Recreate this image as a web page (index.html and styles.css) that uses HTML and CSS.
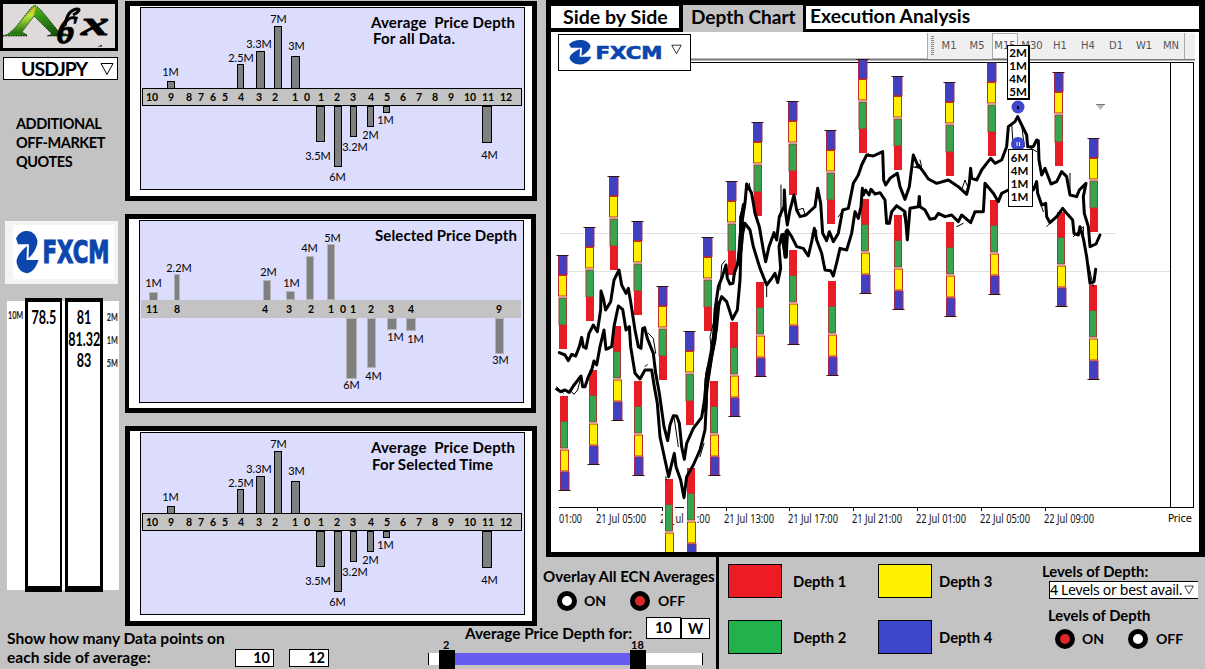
FILE: index.html
```html
<!DOCTYPE html>
<html lang="en">
<head>
<meta charset="utf-8">
<title>Depth Chart</title>
<link rel="stylesheet" href="styles.css">
</head>
<body>
<svg class="defs" width="0" height="0" aria-hidden="true">
  <defs>
    <symbol id="tri" viewBox="0 0 14 14" overflow="visible"><path d="M1 1.5H13L7 12.5Z" fill="#fff" stroke="#000"/></symbol>
    <symbol id="fxcm" viewBox="0 0 96 26" overflow="visible">
      <path d="M1 4.500C4 1 8 0 12 0C17 0 21 2 22.500 6C22.500 10 18 14 13.500 16.500L14 8H3Z" fill="#0b46ad"/>
      <path d="M23.500 17.500L22 20C19 24 15 25.500 12 25.500C6 25.500 2 22 1.500 18.500C2 15 6 12 12 9L11.500 17.500Z" fill="#0b46ad"/>
      <text x="27.500" y="19.500" class="fx-word" textLength="67" lengthAdjust="spacingAndGlyphs">FXCM</text>
    </symbol>
    <g id="up">
      <rect x="-4" y=".5" width="8.500" height="19" class="c4"/>
      <rect x="-4" y="20.500" width="8" height="20.500" class="c3"/>
      <rect x="-3.500" y="43" width="7.500" height="27" class="c2"/>
      <rect x="-3.500" y="70" width="8" height="24" class="c1"/>
      <path d="M-6 .5H6" class="cap"/>
    </g>
    <g id="dn">
      <rect x="-4.500" y="0" width="8" height="25.500" class="c1"/>
      <rect x="-4" y="25.500" width="7" height="26.500" class="c2"/>
      <rect x="-4" y="54" width="8" height="21" class="c3"/>
      <rect x="-4" y="76" width="8.500" height="18" class="c4"/>
      <path d="M-6 94.500H6" class="cap"/>
    </g>
    <g id="avg">
      <g class="bar-line">
        <rect x="27.500" y="74.500" width="7" height="7"/><rect x="97.500" y="57.500" width="6" height="24"/>
        <rect x="116.500" y="44.500" width="8" height="37"/><rect x="134.500" y="19.500" width="7" height="62"/>
        <rect x="151.500" y="49.500" width="8" height="32"/><rect x="176.500" y="99.500" width="8" height="35"/>
        <rect x="194.500" y="99.500" width="7" height="60"/><rect x="210.500" y="99.500" width="6" height="30"/>
        <rect x="227.500" y="99.500" width="6" height="20"/><rect x="243.500" y="99.500" width="6" height="6"/>
        <rect x="342.500" y="99.500" width="9" height="36"/>
        <rect x="2.500" y="81.500" width="379" height="17" class="scale"/>
      </g>
      <g class="num">
        <text x="12" y="94">10</text><text x="31" y="94">9</text><text x="49" y="94">8</text><text x="61" y="94">7</text><text x="73" y="94">6</text><text x="85" y="94">5</text><text x="101" y="94">4</text><text x="119" y="94">3</text><text x="135" y="94">2</text><text x="155" y="94">1</text><text x="167" y="94">0</text><text x="181" y="94">1</text><text x="197" y="94">2</text><text x="213" y="94">3</text><text x="231" y="94">4</text><text x="247" y="94">5</text><text x="263" y="94">6</text><text x="279" y="94">7</text><text x="295" y="94">8</text><text x="311" y="94">9</text><text x="330" y="94">10</text><text x="348" y="94">11</text><text x="366" y="94">12</text>
      </g>
      <g class="val">
        <text x="30.500" y="69">1M</text><text x="101" y="54.500">2.5M</text><text x="119" y="40.500">3.3M</text><text x="138.500" y="16">7M</text><text x="156.500" y="42.500">3M</text><text x="178" y="153">3.5M</text><text x="197.500" y="174">6M</text><text x="215" y="144">3.2M</text><text x="230.500" y="132">2M</text><text x="245.500" y="117">1M</text><text x="349.500" y="152">4M</text>
      </g>
    </g>
    <linearGradient id="peak" x1="0" y1="0" x2="1" y2="1"><stop offset="0" stop-color="#8bd31c"/><stop offset=".45" stop-color="#399a19"/><stop offset="1" stop-color="#063d0c"/></linearGradient>
    <linearGradient id="tip" x1="0" y1="0" x2="0" y2="1"><stop offset="0" stop-color="#f0a020"/><stop offset=".35" stop-color="#b9e83c"/><stop offset="1" stop-color="#176d12"/></linearGradient>
  </defs>
</svg>

<div class="app">
  <aside class="side">
    <div class="logo">
      <svg width="112" height="43" viewBox="0 0 112 43">
        <path d="M0 32L5 30L12 24L28 4L32 1L38 6L56 28L66 31V32H44L49 30L31 12L19 28L24 31V32H1Z" fill="url(#peak)" stroke="#111" stroke-dasharray="1.500 1" stroke-width=".8"/>
        <path d="M7 30L28 6L33 2L31 11L18 29Z" fill="url(#tip)"/>
        <text transform="translate(52 39) skewX(-10)" class="script" font-size="40" textLength="18" lengthAdjust="spacingAndGlyphs">6</text>
        <path d="M62 22C63 13 66 6 74 5C78 5 76 8 70 11" fill="none" stroke="#000" stroke-width="3"/>
        <text x="78" y="31" class="script" font-size="33" textLength="28" lengthAdjust="spacingAndGlyphs">x</text>
        <path d="M94 42.500L99 41V42.500Z"/>
      </svg>
    </div>
    <div class="pair"><span>USDJPY</span><svg width="14" height="14"><use href="#tri"/></svg></div>
    <div class="quotes">ADDITIONAL<br>OFF-MARKET<br>QUOTES</div>
    <div class="broker-card"><div><svg width="96" height="43" viewBox="0 0 96 26" preserveAspectRatio="none"><use href="#fxcm" width="96" height="26"/></svg></div></div>
    <div class="ladder">
      <div class="sizes left"><span>10M</span></div>
      <div class="prices"><span>78.5</span></div>
      <div class="prices"><span>81</span><span>81.32</span><span>83</span></div>
      <div class="sizes"><span>2M</span><span>1M</span><span>5M</span></div>
    </div>
  </aside>

  <section class="charts">
    <div class="panel">
      <svg class="plot" width="385" height="184">
        <rect x=".5" y=".5" width="384" height="182" class="frame"/>
        <use href="#avg"/>
        <g class="head"><text x="231" y="21" textLength="144" xml:space="preserve">Average  Price Depth</text><text x="233" y="37" textLength="82">For all Data.</text></g>
      </svg>
    </div>
    <div class="panel mid">
      <svg class="plot" width="385" height="184">
        <rect x=".5" y=".5" width="384" height="182" class="frame"/>
        <g class="bar-soft">
          <rect x="10.500" y="72.500" width="8" height="9"/><rect x="35.500" y="54.500" width="5" height="26"/><rect x="124.500" y="60.500" width="7" height="20"/><rect x="147.500" y="71.500" width="8" height="8"/><rect x="167.500" y="36.500" width="7" height="43"/><rect x="188.500" y="24.500" width="7" height="55"/><rect x="207.500" y="98.500" width="10" height="60"/><rect x="228.500" y="98.500" width="8" height="49"/><rect x="248.500" y="98.500" width="9" height="11"/><rect x="267.500" y="98.500" width="9" height="12"/><rect x="356.500" y="98.500" width="8" height="35"/>
        </g>
        <rect x="2" y="80" width="380" height="18" fill="#c3c3c3"/>
        <g class="num"><text x="13" y="93">11</text><text x="38" y="93">8</text><text x="126" y="93">4</text><text x="150" y="93">3</text><text x="172" y="93">2</text><text x="192" y="93">1</text><text x="204" y="93">0</text><text x="214" y="93">1</text><text x="232" y="93">2</text><text x="252" y="93">3</text><text x="272" y="93">4</text><text x="360" y="93">9</text></g>
        <g class="val"><text x="14.500" y="67">1M</text><text x="40" y="52">2.2M</text><text x="129.500" y="56">2M</text><text x="152.500" y="67">1M</text><text x="170.500" y="32">4M</text><text x="193.500" y="22">5M</text><text x="212.500" y="169">6M</text><text x="234.500" y="160">4M</text><text x="256.500" y="121">1M</text><text x="276.500" y="123">1M</text><text x="361.500" y="144">3M</text></g>
        <g class="head"><text x="236" y="21" textLength="142">Selected Price Depth</text></g>
      </svg>
    </div>
    <div class="panel">
      <svg class="plot" width="385" height="184">
        <rect x=".5" y=".5" width="384" height="182" class="frame"/>
        <use href="#avg"/>
        <g class="head"><text x="231" y="21" textLength="144" xml:space="preserve">Average  Price Depth</text><text x="232" y="38" textLength="121">For Selected Time</text></g>
      </svg>
    </div>
  </section>

  <main class="main">
    <nav class="tabs"><span class="tab t1">Side by Side</span><span class="tab t2">Depth Chart</span><span class="tab t3">Execution Analysis</span></nav>
    <div class="stage">
      <svg class="market" width="648" height="520" viewBox="551 32 648 520">
        <g stroke="#e2e2e2"><path d="M559 233.500H1116M559 271.500H1170"/></g>
        <path d="M691 59.500H1195" stroke="#777" stroke-width="2"/>
        <path d="M691 62.500H1194M1170.500 63V507M1193.500 63V507M559 507.500H1194" fill="none" stroke="#000"/>
        <path d="M597.500 507v4M662.500 507v4M726.500 507v4M789.500 507v4M853.500 507v4M917.500 507v4M981.500 507v4M1045.500 507v4" stroke="#000"/>
        <g class="time">
          <text x="559" y="523" textLength="23" lengthAdjust="spacingAndGlyphs">01:00</text>
          <text x="596" y="523" textLength="50" lengthAdjust="spacingAndGlyphs">21 Jul 05:00</text>
          <text x="660" y="523" textLength="50" lengthAdjust="spacingAndGlyphs">21 Jul 09:00</text>
          <text x="724" y="523" textLength="50" lengthAdjust="spacingAndGlyphs">21 Jul 13:00</text>
          <text x="788" y="523" textLength="50" lengthAdjust="spacingAndGlyphs">21 Jul 17:00</text>
          <text x="852" y="523" textLength="50" lengthAdjust="spacingAndGlyphs">21 Jul 21:00</text>
          <text x="916" y="523" textLength="50" lengthAdjust="spacingAndGlyphs">22 Jul 01:00</text>
          <text x="980" y="523" textLength="50" lengthAdjust="spacingAndGlyphs">22 Jul 05:00</text>
          <text x="1044" y="523" textLength="50" lengthAdjust="spacingAndGlyphs">22 Jul 09:00</text>
        </g>
        <text x="1168" y="522" class="price" textLength="24">Price</text>
        <path d="M663 479h12v45h-12zM684 500h13v30h-13z" fill="#fff"/>
        <use href="#up" x="562.500" y="255"/><use href="#up" x="589.500" y="227"/><use href="#up" x="613.500" y="176"/><use href="#up" x="637.500" y="221"/><use href="#up" x="662.500" y="286"/><use href="#up" x="689.500" y="331"/><use href="#up" x="707.500" y="237"/><use href="#up" x="731.500" y="181"/><use href="#up" x="757.500" y="122"/><use href="#up" x="792.500" y="101"/><use href="#up" x="830.500" y="130"/><use href="#up" x="862.500" y="59"/><use href="#up" x="897.500" y="76"/><use href="#up" x="949.500" y="82"/><use href="#up" x="991.500" y="62"/><use href="#up" x="1058.500" y="72"/><use href="#up" x="1093.500" y="138"/>
        <use href="#dn" x="564.500" y="396"/><use href="#dn" x="593.500" y="370"/><use href="#dn" x="617.500" y="326"/><use href="#dn" x="638.500" y="381"/><use href="#dn" x="669.500" y="479"/><use href="#dn" x="691.500" y="468"/><use href="#dn" x="714.500" y="381"/><use href="#dn" x="734.500" y="322"/><use href="#dn" x="760.500" y="282"/><use href="#dn" x="793.500" y="250"/><use href="#dn" x="832.500" y="281"/><use href="#dn" x="865.500" y="199"/><use href="#dn" x="898.500" y="215"/><use href="#dn" x="950.500" y="222"/><use href="#dn" x="994.500" y="200"/><use href="#dn" x="1061.500" y="212"/><use href="#dn" x="1093.500" y="285"/>
        <g transform="translate(540 230) scale(.33333)" class="trace">
          <polyline points="58,368 75,375 85,392 95,373 107,378 118,350 125,322 130,350 138,355 147,310 160,285 172,305 182,240 183,183 190,205 197,240 212,215 222,150 237,120 245,165 258,190 265,175 272,215 285,300 295,350 303,355 308,295 314,293 322,325 340,370 347,430 358,490 365,540 372,590 383,632 390,585 400,557 410,558 418,580 425,650 433,688 440,640 460,595 485,562 495,500 500,430 515,370 522,300 525,240 535,170 547,140 558,105 562,145 570,162 579,160 583,130 597,90 602,20"/>
          <polyline points="50,477 62,485 75,480 88,487 100,468 123,438 128,470 135,470 145,440 155,420 162,393 170,405 180,350 192,300 198,358 215,350 222,290 235,228 248,238 258,300 268,290 272,350 285,430 300,447 315,420 335,420 343,470 352,520 360,620 375,690 386,740 393,710 403,670 408,710 422,750 432,803 440,740 460,705 480,660 495,600 498,540 500,480 515,380 525,330 530,240 545,200 560,215 577,268 592,240 600,150 603,60"/>
          <path class="wide" d="M495 540L500 450L518 350L527 300L535 220M598 85L602 20L607 -20"/>
          <path class="hair" d="M90 480L102 493L113 480L123 440M315 410L322 403M325 310L340 325L347 370M402 560L415 650M515 370L510 320L520 280M540 180L545 105L555 92M480 680L492 640M50 470L70 490M378 740V750"/>
        </g>
        <g transform="translate(700 60) scale(.33333)" class="trace">
          <polyline points="122,530 122,470 135,430 140,372 155,400 165,460 178,500 190,570 197,605 207,560 222,518 230,540 238,470 252,440 253,390 257,460 262,495 270,450 282,405 290,450 300,470 318,465 345,440 353,385 362,430 368,520 380,542 388,515 400,545 415,520 428,450 445,445 460,370 475,345 485,315 500,285 520,288 548,275 551,360 557,375 570,355 592,340 600,380 615,418 628,380 640,285 655,320"/>
          <polyline points="123,570 128,520 135,490 150,510 160,560 180,625 200,675 215,655 225,640 233,668 242,625 237,560 245,525 257,590 262,510 275,530 290,560 310,565 325,588 335,545 343,505 350,540 365,580 375,630 392,632 400,648 412,600 420,565 440,570 455,520 465,455 475,475 483,440 487,385 490,405 497,390 507,405 513,388 525,402 540,398 555,420 560,490 568,490 575,455 590,437 615,455 622,540 630,445 655,440 658,410"/>
          <path class="wide" d="M115 610L123 550L125 480L132 435M250 525L257 590L260 515"/>
          <path class="hair" d="M148 370L155 410M243 375V470M292 450L310 445L315 465M350 390L345 440M415 470L430 450M335 520L350 510V545M200 675V710M490 300L505 280M635 320L660 325M610 460L618 500"/>
        </g>
        <g transform="translate(870 0) scale(.33333)" class="trace">
          <polyline points="145,495 160,515 175,537 200,550 235,540 265,560 290,583 298,550 302,505 305,535 320,540 335,510 350,490 362,475 375,490 395,480 410,440 415,380 435,365 443,350 455,375 470,405 473,440 490,440 500,420 505,422 507,480 515,525 525,505 543,552 560,545 575,515 590,530 600,585 620,590 628,570 648,550 640,590 643,640 655,680 660,740 678,732 690,705"/>
          <polyline points="148,590 150,620 165,630 180,658 195,655 205,640 225,650 245,645 265,665 275,645 302,668 315,635 340,635 345,550 370,580 385,605 395,580 415,570 490,570 500,545 503,580 515,615 527,610 530,650 540,668 560,650 578,625 590,640 608,660 612,700 625,705 630,680 640,715 650,770 660,850 672,845 677,808"/>
          <path class="hair" d="M135 500H155L150 480M275 570L285 540L293 560M425 370L430 445M455 375L463 440M475 440L500 455M260 680L280 670M600 520V575M508 600L520 635M530 680L545 665M610 710L640 680V720M655 790L670 860"/>
        </g>
        <circle cx="1018" cy="107" r="6.500" fill="#3f48cc"/><path d="M1018 106v3" stroke="#000" stroke-width="2"/>
        <circle cx="1018" cy="144" r="7" fill="#3f48cc"/><path d="M1017 142v4M1019.500 142v4" stroke="#fff"/>
        <path d="M1096 104h9l-4.500 6z" fill="#b0b8b8"/><path d="M1096 104.500h9" stroke="#777"/>
      </svg>
      <div class="broker"><div><svg width="96" height="25" viewBox="0 0 96 26" preserveAspectRatio="none"><use href="#fxcm" width="96" height="26"/></svg></div><svg width="11" height="11"><use href="#tri"/></svg></div>
      <div class="toolbar"><i class="grip"></i><span>M1</span><span>M5</span><span class="on">M15</span><span>M30</span><span>H1</span><span>H4</span><span>D1</span><span>W1</span><span class="last">MN</span></div>
      <div class="callout top">2M<br>1M<br>4M<br>5M</div>
      <div class="callout low">6M<br>4M<br>1M<br>1M</div>
    </div>
  </main>

  <section class="overlay">
    <div class="title">Overlay All ECN Averages</div>
    <div class="radios"><i class="radio"></i><span>ON</span><i class="radio sel"></i><span>OFF</span></div>
  </section>

  <section class="points">
    <div class="ptext">Show how many Data points on<br>each side of average:</div>
    <div class="box">10</div><div class="box">12</div>
  </section>

  <section class="average">
    <div class="avg-row"><span class="avg-text">Average Price Depth for:</span><div class="box n">10</div><div class="box w">W</div></div>
    <div class="marks"><span>2</span><span>18</span></div>
    <div class="slider"><i class="pad"></i><i class="handle"></i><i class="fill"></i><i class="handle"></i></div>
  </section>

  <section class="legend">
    <div class="keys">
      <div class="key"><i class="sw red"></i>Depth 1</div><div class="key"><i class="sw yellow"></i>Depth 3</div>
      <div class="key"><i class="sw green"></i>Depth 2</div><div class="key"><i class="sw blue"></i>Depth 4</div>
    </div>
    <div class="levels">
      <div class="lv1">Levels of Depth:</div>
      <div class="select"><span>4 Levels or best avail.</span><svg width="10" height="10"><use href="#tri"/></svg></div>
      <div class="lv2">Levels of Depth</div>
      <div class="radios"><i class="radio sel"></i><span>ON</span><i class="radio"></i><span>OFF</span></div>
    </div>
  </section>
</div>
</body>
</html>
```

FILE: styles.css
```css
* { box-sizing: border-box; }
body { margin: 0; background: #c3c3c3; color: #000; font: bold 15px/18px Lato, Carlito, sans-serif; overflow: hidden; }
.defs { display: block; position: absolute; }
svg { display: block; }
.app { display: grid; width: 1205px; height: 669px; grid-template-columns: 125px 303px 115px 173px 489px; grid-template-rows: 557px 60px 8px 44px; white-space: nowrap; }
.side { grid-area: 1 / 1 / 4 / 2; }
.charts { grid-area: 1 / 2 / 4 / 4; padding-top: 1px; }
.main { grid-area: 1 / 4 / 2 / 6; margin-left: 3px; background: #000; padding: 5px 6px 5px 5px; }
.overlay { grid-area: 2 / 4 / 3 / 5; padding-top: 10px; }
.points { grid-area: 4 / 1 / 5 / 3; display: flex; align-items: flex-start; padding: 5px 0 0 7px; }
.average { grid-area: 3 / 3 / 5 / 5; }
.legend { grid-area: 2 / 5 / 5 / 6; border-left: 3px solid #000; display: flex; }

.logo { width: 118px; height: 51px; border: 3px solid #000; border-top-width: 4px; background: #dfdada; }
.script { font-family: "Liberation Serif", serif; font-style: italic; font-weight: bold; stroke: #000; stroke-width: .8; }
.pair { margin: 6px 0 0 3px; width: 115px; height: 23px; border: 1px solid #000; background: #fff; display: flex; align-items: center; justify-content: space-between; padding: 0 3px 0 17px; font-size: 19.500px; letter-spacing: -1px; }
.quotes { margin: 34px 0 0 16px; line-height: 19px; font-size: 14.500px; letter-spacing: -.45px; }
.broker-card { margin: 50px 0 0 5px; width: 113px; height: 63px; background: #f4f4f4; padding: 4px 4px 5px 8px; }
.broker-card div { background: #fff; height: 54px; padding: 6px 2px; }
.fx-word { font: bold 19px "DejaVu Sans", sans-serif; fill: #0b46ad; stroke: #0b46ad; stroke-width: .7; }
.ladder { margin: 14px 0 0 7px; width: 112px; height: 294px; display: flex; background: linear-gradient(#c3c3c3 3px, #fff 3px, #fff 292px, #c3c3c3 292px); }
.ladder span { display: block; transform: scaleX(.66); }
.sizes { width: 16px; padding-top: 7px; font: bold 11px/23px Lato, sans-serif; display: flex; flex-direction: column; align-items: center; color: #222; }
.sizes.left { width: 18px; padding-top: 5px; }
.prices { width: 37px; margin-right: 3px; height: 294px; border: solid #000; border-width: 4px 2px 6px 3px; display: flex; flex-direction: column; align-items: center; padding-top: 4px; font-size: 19px; line-height: 21.500px; }
.prices + .prices { width: 38px; margin-right: 1px; border-right-width: 3px; }

.panel { width: 412px; height: 200px; border: 5px solid #000; background: #fff; padding: 1px 0 0 10px; margin-bottom: 13px; }
.panel.mid { width: 411px; height: 199px; padding-left: 10px; margin-bottom: 13px; border-left-width: 4px; }
.frame { fill: #dcdcfc; stroke: #000; }
.bar-line rect { fill: #808080; stroke: #000; }
.bar-line .scale { fill: #c3c3c3; }
.bar-soft rect { fill: #808080; stroke: #b4b4b4; }
.num { font: bold 10.500px Lato, sans-serif; text-anchor: middle; }
.val { font: 11px Lato, sans-serif; text-anchor: middle; }
.head { font: bold 15px Lato, sans-serif; white-space: pre; }

.tabs { display: flex; height: 27px; font-size: 19.300px; line-height: 22px; }
.t1 { width: 128px; height: 22px; margin: 1px 4px 4px 0; background: #fff; padding-left: 12px; font-size: 19.600px; line-height: 21px; }
.t2 { width: 120px; background: #c3c3c3; margin-right: 3px; padding-left: 8px; line-height: 23px; font-size: 19px; }
.t3 { flex: 1; background: #fff; height: 23px; margin-top: 1px; padding-left: 4px; line-height: 19px; }
.stage { position: relative; height: 520px; background: #fff; overflow: hidden; }
.market { position: absolute; inset: 0; }
.c1 { fill: #e81c24; } .c2 { fill: #35a64f; stroke: #a04030; } .c3 { fill: #ffee00; stroke: #c03020; } .c4 { fill: #4040c0; stroke: #a02850; }
.cap { stroke: #301010; }
.trace { fill: none; stroke: #000; stroke-width: 9; stroke-linejoin: round; stroke-linecap: round; }
.wide { stroke-width: 13; }
.hair { stroke-width: 3; }
.time { font: 12.500px "Noto Sans", sans-serif; fill: #111; }
.price { font: 10px "DejaVu Sans", sans-serif; }
.broker { position: absolute; left: 7px; top: 2px; width: 133px; height: 37px; border: 1px solid #000; background: #fff; display: flex; padding: 5px 8px 0 9px; justify-content: space-between; }
.broker > svg { margin-top: 4px; }
.toolbar { position: absolute; left: 376px; top: 1px; width: 268px; height: 26px; background: #efefef; display: flex; align-items: center; border-left: 1px solid #aaa; font: 10px/26px "DejaVu Sans", sans-serif; color: #555; }
.toolbar span { width: 28px; text-align: center; }
.toolbar .on { border: 1px solid #aaa; width: 26px; background: #f8f8f8; margin: 0 0 0 1px; line-height: 24px; }
.toolbar .last { width: 27px; border-right: 1px solid #aaa; }
.grip { width: 3px; height: 20px; margin: 0 1px 0 3px; background: repeating-linear-gradient(#888 0 1px, #efefef 1px 2px); }
.callout { position: absolute; border: 1px solid #000; background: #fff; font-size: 11.500px; line-height: 13px; text-align: center; }
.callout.top { left: 456px; top: 13px; width: 23px; height: 55px; border-right-width: 2px; border-bottom-width: 2px; }
.callout.low { left: 457px; top: 117px; width: 25px; height: 58px; padding: 1px 2px 0 0; }

.title { font-size: 15.100px; }
.radios { display: flex; align-items: center; }
.radio { width: 20px; height: 20px; border: 5px solid #000; border-radius: 50%; background: #fff; flex: none; }
.radio.sel { background: #e02828; }
.overlay .radios { padding: 6px 0 0 14px; font-size: 14px; }
.overlay span:nth-of-type(1), .levels span { margin-left: 7px; }
.overlay .radios span:nth-of-type(1) { width: 46px; }
.overlay .radios span:nth-of-type(2) { margin-left: 8px; }
.box { background: #fff; border: 1px solid #000; height: 18px; width: 39px; margin-top: 19px; text-align: right; padding-right: 3px; line-height: 16px; font-size: 14.500px; }
.ptext { width: 228px; line-height: 19px; font-size: 15.550px; margin-top: -1px; }
.points .box + .box { margin-left: 15px; width: 40px; }
.avg-row { display: flex; height: 21px; padding-left: 37px; }
.avg-text { width: 181px; padding-top: 7px; font-size: 15.300px; }
.avg-row .box { margin: 0; width: 35px; height: 22px; text-align: center; line-height: 20px; padding: 0; }
.avg-row .w { width: 29px; margin-top: 1px; height: 21px; }
.marks { display: flex; height: 12px; font-size: 11px; line-height: 14px; padding-left: 15px; }
.marks span:first-child { width: 188px; }
.slider { display: flex; height: 19px; align-items: center; width: 275px; background: linear-gradient(#c3c3c3 3px, #fff 3px, #fff 15px, #c3c3c3 15px); }
.slider::before, .slider::after { content: ""; width: 1px; height: 12px; background: #000; margin-top: -1px; }
.slider::after { margin-left: auto; }
.pad { width: 10px; }
.handle { width: 16px; height: 19px; background: #000; }
.fill { width: 175px; height: 12px; background: #675cf0; margin-top: -1px; }

.keys { display: grid; grid-template-columns: 150px 170px; grid-template-rows: 34px 34px; row-gap: 22px; padding: 7px 0 0 9px; font-size: 14.800px; line-height: 16px; }
.key { display: flex; align-items: center; gap: 11px; }
.sw { width: 54px; height: 34px; border: 1px solid #000; }
.red { background: #ed1c24; } .yellow { background: #fff200; } .green { background: #22b14c; } .blue { background: #3f48cc; }
.key:nth-child(even) .sw { margin-right: -4px; }
.levels { padding-top: 5px; margin-left: -6px; font-size: 14.800px; }
.lv1 { height: 19px; }
.select { margin-left: 7px; width: 149px; height: 18px; background: #fff; border: solid #000; border-width: 1px 0 1px 1px; font: 14px/16px "Noto Sans", sans-serif; display: flex; align-items: center; justify-content: space-between; padding-right: 4px; }
.select span { margin: 0; letter-spacing: -.3px; }
.lv2 { margin: 7px 0 6px 6px; }
.levels .radios { padding-left: 13px; margin-top: -1px; font-size: 14px; }
.levels .radios span:nth-of-type(1) { width: 46px; }
.levels .radios span:nth-of-type(2) { margin-left: 8px; }
```
